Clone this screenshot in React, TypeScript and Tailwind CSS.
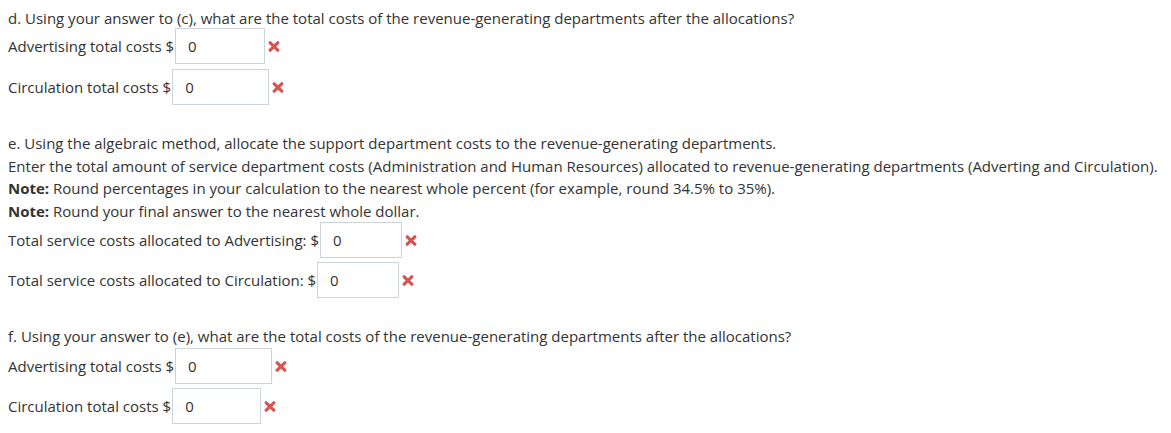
import clsx from 'clsx';

interface AnswerRowProps {
  label: string;
  boxWidth: string;
  className?: string;
}

const WrongMark = () => (
  <svg width="12" height="11" viewBox="0 0 12 11" className="ml-[3px] shrink-0">
    <path d="M2.2 1.8 L9.8 9.2 M9.8 1.8 L2.2 9.2" stroke="#d9534f" strokeWidth="3.2" strokeLinecap="round" />
  </svg>
);

function AnswerRow({ label, boxWidth, className }: AnswerRowProps) {
  return (
    <div className={clsx('flex items-center h-9', className)}>
      <span className="whitespace-pre">{label}</span>
      <div
        className={clsx(
          'ml-px h-9 border border-[#ccd3da] bg-white flex items-center pl-3',
          boxWidth
        )}
      >
        0
      </div>
      <WrongMark />
    </div>
  );
}

export default function App() {
  return (
    <div
      className="min-h-screen bg-white px-2 pt-[7px] text-[15px] text-[#333333]"
      style={{ fontFamily: '"Open Sans", "Liberation Sans", sans-serif' }}
    >
      {/* part d */}
      <p className="leading-[22px]">
        d. Using your answer to (c), what are the total costs of the revenue-generating departments after the allocations?
      </p>
      <AnswerRow label="Advertising total costs $" boxWidth="w-[90px]" className="mt-[-1px]" />
      <AnswerRow label="Circulation total costs $" boxWidth="w-[97px]" className="mt-[5px]" />

      {/* part e */}
      <div className="mt-[27px] leading-[22.5px]">
        <p>e. Using the algebraic method, allocate the support department costs to the revenue-generating departments.</p>
        <p className="whitespace-nowrap">
          Enter the total amount of service department costs (Administration and Human Resources) allocated to revenue-generating departments (Adverting and Circulation).
        </p>
        <p>
          <span className="font-bold">Note:</span> Round percentages in your calculation to the nearest whole percent (for example, round 34.5% to 35%).
        </p>
        <p>
          <span className="font-bold">Note:</span> Round your final answer to the nearest whole dollar.
        </p>
      </div>
      <AnswerRow label="Total service costs allocated to Advertising: $" boxWidth="w-[82px]" />
      <AnswerRow label="Total service costs allocated to Circulation: $" boxWidth="w-[82px]" className="mt-[4px]" />

      {/* part f */}
      <p className="mt-[27px] leading-[22px]">
        f. Using your answer to (e), what are the total costs of the revenue-generating departments after the allocations?
      </p>
      <AnswerRow label="Advertising total costs $" boxWidth="w-[97px]" className="mt-[1px]" />
      <AnswerRow label="Circulation total costs $" boxWidth="w-[89px]" className="mt-[4px]" />
    </div>
  );
}
